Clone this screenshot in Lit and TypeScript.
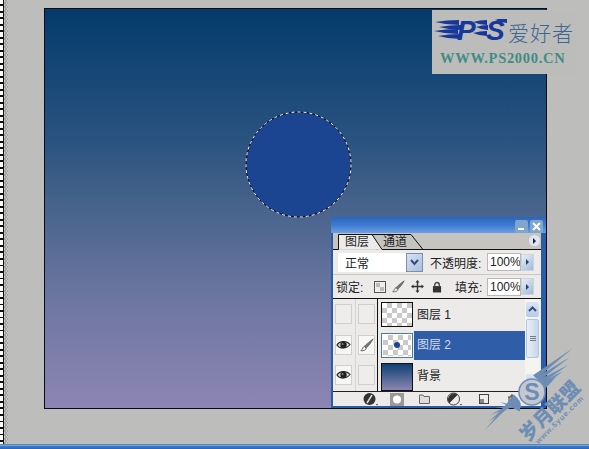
import { LitElement, html, css, svg } from "lit";
import { customElement } from "lit/decorators.js";

const eye = html`<svg class="eye" viewBox="0 0 16 12" width="16" height="12"><path d="M1 6C4 1.5 11 1 15 5.5C11 10.5 4 10.500 1 6Z" fill="#d8d8d4" stroke="#222" stroke-width="1.1"/><circle cx="8" cy="6" r="3.4" fill="#222"/><circle cx="7" cy="5" r="1" fill="#999"/></svg>`;
const brush = (w = 16) => html`<svg viewBox="0 0 16 16" width="${w}" height="${w}"><path d="M15 1C11 4 7 7 5 9.500L7 11.500C10 9 13 5 15 1Z" fill="#777" stroke="#333" stroke-width=".6"/><path d="M5 9.500C3 10 3 13 1 14.500C4 15 7 14 7 11.500Z" fill="#eee" stroke="#333" stroke-width=".8"/></svg>`;

@customElement("app-root")
export class AppRoot extends LitElement {
  static styles = css`
    :host { display: block; width: 589px; height: 449px; overflow: hidden; position: relative; background: #bdbdbb; font-family: "Liberation Sans", "Noto Sans CJK SC", sans-serif; color: #222; }
    .page { display: flex; flex-direction: column; height: 449px; }
    .main { flex: 1; display: flex; min-height: 0; }
    .ruler { width: 3px; background: repeating-linear-gradient(180deg, #fff 0 4.500px, #111 4.500px 6.500px); border-right: 1px solid #111; }
    .dither { width: 4px; background: repeating-conic-gradient(#a3a3a3 0 25%, #c9c9c9 0 50%) 0 0 / 3px 4px; }
    .work { flex: 1; padding: 8px 0 0 36px; box-sizing: border-box; }
    .canvas { width: 501px; height: 399px; border: 1px solid #0b0b18; background: linear-gradient(180deg, #033b6c 0%, #2a5380 33%, #48648c 50%, #6b76a0 72%, #8d85b3 100%); }
    .status { height: 5px; background: linear-gradient(180deg, #8fb3dd 0, #3a76c6 40%, #2d66b8 100%); border-top: 1px solid #5a87bf; box-sizing: border-box; }

    .sel { position: absolute; left: 245px; top: 111px; }

    .logo { position: absolute; left: 432px; top: 10px; width: 145px; height: 64px; background: #bcbcbb; overflow: hidden; }
    .flames { position: absolute; left: 1px; top: 9px; }
    .ps { position: absolute; top: 6px; font: italic 900 28px/30px "Liberation Sans", sans-serif; color: #17389a; }
    .p { left: 25px; }
    .s { left: 54px; }
    .love { position: absolute; left: 76px; top: 9px; font: 300 21px/26px "Noto Sans CJK SC", sans-serif; color: #3d6691; white-space: nowrap; letter-spacing: 1px; }
    .www { position: absolute; left: 8px; top: 41px; font: 700 14.500px/15px "Liberation Serif", serif; color: #3f8c84; white-space: nowrap; letter-spacing: .7px; }

    .panel { position: absolute; left: 331px; top: 217px; width: 215px; height: 191px; background: #ecebea; border: solid #2b5ca6; border-width: 0 5px 2px 2px; box-sizing: border-box; display: flex; flex-direction: column; }
    .title { height: 16px; margin: 0 -5px 0 -2px; flex: none; background: linear-gradient(180deg, #2b66bd 0, #3e7ad0 50%, #6b9fe6 100%); display: flex; justify-content: flex-end; align-items: center; gap: 2px; padding: 2px 3px 0 0; box-sizing: border-box; }
    .wbtn { width: 13px; height: 13px; background: #7fa6cc; border-radius: 2px; display: flex; align-items: center; justify-content: center; }
    .tabs { height: 17px; flex: none; background: #c5c4c1; display: flex; align-items: center; position: relative; font-size: 12px; }
    .tabshape { position: absolute; left: 0; top: 0; }
    .tab { position: relative; line-height: 14px; }
    .t1 { margin-left: 12px; }
    .t2 { margin-left: 14px; }
    .menu { position: absolute; right: 1px; top: 2px; width: 11px; height: 11px; border-radius: 50%; background: #dfe6f2; display: flex; align-items: center; justify-content: center; }
    .tri { width: 0; height: 0; border-left: 3px solid #223; border-top: 3px solid transparent; border-bottom: 3px solid transparent; }

    .blend { height: 25px; flex: none; display: flex; align-items: center; padding-left: 5px; border-bottom: 1px solid #c9c8c4; font-size: 12px; box-sizing: border-box; }
    .lock { height: 24px; flex: none; display: flex; align-items: center; padding-left: 3px; font-size: 12px; border-bottom: 1px solid #111; box-sizing: border-box; }
    .select { width: 85px; height: 19px; background: #fff; display: flex; align-items: center; padding-left: 7px; box-sizing: border-box; position: relative; font-size: 12px; }
    .arrow { position: absolute; right: 0; top: 0; width: 17px; height: 19px; background: linear-gradient(135deg, #d5e2f2, #a9c0dc); border: 1px solid #7d8faa; box-sizing: border-box; display: flex; align-items: center; justify-content: center; }
    .lbl { margin-left: 7px; font-size: 12px; white-space: nowrap; width: 53px; }
    .val { margin-left: 4px; width: 34px; height: 18px; background: #fff; box-sizing: border-box; border: 1px solid #b9b8b4; font-size: 12px; line-height: 16px; overflow: hidden; padding-left: 2px; white-space: nowrap; }
    .step { width: 13px; height: 17px; background: linear-gradient(135deg, #e9f0f8, #9fbad6); display: flex; align-items: center; justify-content: center; border: 1px solid #c8d4e2; box-sizing: border-box; }
    .step .tri { border-left-color: #24406c; }
    .lockt { width: 38px; }
    .licons { display: flex; align-items: center; gap: 6px; width: 81px; }
    .padlock { margin-left: 2px; }
    .fill { width: 28px; white-space: nowrap; }

    .layers { height: 92px; flex: none; display: flex; }
    .rows { width: 192px; flex: none; display: flex; flex-direction: column; }
    .row { height: 30.5px; display: flex; flex: none; box-sizing: border-box; font-size: 12px; overflow: hidden; }
    .c1 { width: 23px; flex: none; padding: 5px 0 0 2px; border-right: 1px solid #d6d5d2; box-sizing: border-box; }
    .c2 { width: 22px; flex: none; padding: 5px 0 0 2px; border-right: 1px solid #111; box-sizing: border-box; }
    .box { width: 17px; height: 20px; box-sizing: border-box; border: 1px solid #d0cfcc; display: flex; align-items: center; justify-content: center; background: #eeedec; }
    .box.on { background: #f6f6f5; }
    .thumb { width: 32px; height: 25px; margin: 3px 0 0 3px; box-sizing: border-box; border: 1px solid #111; flex: none; background: repeating-conic-gradient(#c9c9c9 0 25%, #fff 0 50%) 0 0 / 10px 10px; display: flex; align-items: center; justify-content: center; }
    .thumb.active { border: 2px solid #fff; outline: 1px solid #4d7d96; outline-offset: -1px; }
    .dot { width: 6px; height: 6px; border-radius: 50%; background: #1c4490; }
    .bg { background: linear-gradient(180deg, #0e4272, #8d85b3); height: 28px; }
    .name { margin: 3px 0 0 1px; padding-left: 3px; flex: 1; height: 30px; line-height: 26px; }
    .name.sel-row { background: #2f5da7; color: #cfdcf0; margin-top: 1px; line-height: 29px; }
    .sb { width: 15px; flex: none; background: #f4f4f0; display: flex; flex-direction: column; padding: 3px 1px 0; box-sizing: border-box; }
    .sbb { height: 15px; background: linear-gradient(180deg, #dce6f4, #b6cbe6); border-radius: 2px; flex: none; display: flex; align-items: center; justify-content: center; }
    .thumbbar { margin-top: 2px; height: 39px; background: linear-gradient(90deg, #e8eef8, #c7d6ea); border: 1px solid #b4c6de; border-radius: 2px; box-sizing: border-box; display: flex; align-items: center; justify-content: center; flex: none; }
    .down { margin-top: 16px; }
    .grip { width: 6px; height: 6px; background: repeating-linear-gradient(180deg, #778 0 1px, transparent 1px 2px); }

    .bar { flex: 1; border-top: 1px solid #222; background: #ecebea; display: flex; align-items: center; padding-left: 30px; box-sizing: border-box; min-height: 0; }
    .bar svg { display: block; flex: none; }
    .m12 { margin-left: 12px; }
    .m15 { margin-left: 15px; }
    .m17 { margin-left: 17px; }
    .m18 { margin-left: 18px; }

    .mark { position: absolute; left: 480px; top: 340px; pointer-events: none; }
    .mark text { fill: #6d8db5; font-family: "Noto Sans CJK SC", sans-serif; font-weight: 900; }
    .mark .lat { font-family: "Liberation Sans", sans-serif; font-weight: 700; }
    .mark .dom { letter-spacing: .9px; }
  `;

  feathers(cx: number, cy: number, tips: number[][]) {
    return tips.map(([x, y], i) => {
      const a = Math.atan2(y - cy, x - cx) + Math.PI / 2;
      const w = 2.4;
      const off = (i - (tips.length - 1) / 2) * 3.6;
      const sx = cx + off * Math.cos(a);
      const sy = cy + off * Math.sin(a);
      return svg`<path d="M${sx - w * Math.cos(a)} ${sy - w * Math.sin(a)} L${x} ${y} L${sx + w * Math.cos(a)} ${sy + w * Math.sin(a)}Z" fill="#6d8db5"/>`;
    });
  }

  render() {
    const fl = [[2, 3, 24], [6, 8, 22], [1, 12, 24], [5, 17, 22], [40, 3, 14], [43, 8, 12], [40, 14, 14], [62, 1, 12]];
    return html`
      <div class="page">
        <div class="main">
          <div class="ruler"></div><div class="dither"></div>
          <div class="work"><div class="canvas"></div></div>
        </div>
        <div class="status"></div>
      </div>

      <svg class="sel" width="107" height="107" viewBox="0 0 107 107">
        <circle cx="53.500" cy="53.500" r="52.500" fill="#1c4591"/>
        <circle cx="53.500" cy="53.500" r="52.500" fill="none" stroke="#050a20" stroke-width="1"/>
        <circle cx="53.500" cy="53.500" r="52.500" fill="none" stroke="#fff" stroke-width="1" stroke-dasharray="3 3"/>
      </svg>

      <div class="logo">
        <svg class="flames" width="80" height="26" viewBox="0 0 80 26">
          ${fl.map(([x, y, l]) => svg`<path d="M${x} ${y}Q${x + l / 2} ${y - 2} ${x + l} ${y - 2}L${x + l} ${y + 3}Q${x + l / 2} ${y + 3} ${x} ${y}Z" fill="#17389a"/>`)}
        </svg>
        <div class="ps p">P</div>
        <div class="ps s">S</div>
        <div class="love">爱好者</div>
        <div class="www">WWW.PS2000.CN</div>
      </div>

      <div class="panel">
        <div class="title">
          <div class="wbtn"><svg width="9" height="9"><rect x="1" y="6" width="6" height="2" fill="#fff"/></svg></div>
          <div class="wbtn"><svg width="9" height="9"><path d="M1 1L8 8M8 1L1 8" stroke="#fff" stroke-width="2"/></svg></div>
        </div>
        <div class="tabs">
          <svg class="tabshape" width="208" height="17" viewBox="0 0 208 17">
            <path d="M44 16.500L39 1.500H78L90 16.500" fill="none" stroke="#111"/>
            <path d="M0 16.500H5.500V1.500H39L49 16.500H208" fill="#ecebea" stroke="#111"/>
          </svg>
          <span class="tab t1">图层</span>
          <span class="tab t2">通道</span>
          <div class="menu"><div class="tri"></div></div>
        </div>
        <div class="blend">
          <div class="select">正常
            <div class="arrow"><svg width="9" height="7"><path d="M1 1L4.500 5L8 1" fill="none" stroke="#33507c" stroke-width="2"/></svg></div>
          </div>
          <div class="lbl">不透明度:</div>
          <div class="val">100%</div>
          <div class="step"><div class="tri"></div></div>
        </div>
        <div class="lock">
          <div class="lockt">锁定:</div>
          <div class="licons">
            <svg width="12" height="12"><rect x=".5" y=".5" width="11" height="11" fill="#eee" stroke="#555"/><rect x="2" y="2" width="4" height="4" fill="#bbb"/><rect x="6" y="6" width="4" height="4" fill="#bbb"/></svg>
            ${brush(13)}
            <svg width="13" height="13" viewBox="0 0 13 13"><path d="M6.500 0L8.500 2.500H7.200V5.800H10.500V4.500L13 6.500L10.500 8.500V7.200H7.200V10.500H8.500L6.500 13L4.500 10.500H5.800V7.200H2.500V8.500L0 6.500L2.500 4.500V5.800H5.800V2.500H4.500Z" fill="#333"/></svg>
            <svg class="padlock" width="10" height="12" viewBox="0 0 11 12"><path d="M3 5V3.500A2.500 2.500 0 0 1 8 3.500V5" fill="none" stroke="#444" stroke-width="1.500"/><rect x="1" y="5" width="9" height="7" fill="#333"/></svg>
          </div>
          <div class="fill">填充:</div>
          <div class="val">100%</div>
          <div class="step"><div class="tri"></div></div>
        </div>
        <div class="layers">
          <div class="rows">
            <div class="row">
              <div class="c1"><div class="box"></div></div>
              <div class="c2"><div class="box"></div></div>
              <div class="thumb"></div>
              <div class="name">图层 1</div>
            </div>
            <div class="row">
              <div class="c1"><div class="box on">${eye}</div></div>
              <div class="c2"><div class="box on">${brush(14)}</div></div>
              <div class="thumb active"><div class="dot"></div></div>
              <div class="name sel-row">图层 2</div>
            </div>
            <div class="row">
              <div class="c1"><div class="box on">${eye}</div></div>
              <div class="c2"><div class="box"></div></div>
              <div class="thumb bg"></div>
              <div class="name">背景</div>
            </div>
          </div>
          <div class="sb">
            <div class="sbb"><svg width="9" height="7"><path d="M1 5L4.500 1.500L8 5" fill="none" stroke="#33507c" stroke-width="2"/></svg></div>
            <div class="thumbbar"><div class="grip"></div></div>
            <div class="sbb down"></div>
          </div>
        </div>
        <div class="bar">
          <svg width="15" height="14" viewBox="0 0 15 14"><circle cx="6.500" cy="7" r="6" fill="#333"/><path d="M4 11L9 3" stroke="#ddd" stroke-width="1.500"/><path d="M13 12h2l-1 1.500z" fill="#222"/></svg>
          <svg class="m12" width="14" height="13" viewBox="0 0 14 13"><rect width="14" height="13" fill="#999"/><circle cx="7" cy="6.500" r="4" fill="#fff"/></svg>
          <svg class="m15" width="11" height="10" viewBox="0 0 11 10"><path d="M.5 2.500V1H4L5 2.500H10.500V9.500H.5Z" fill="#ddd" stroke="#666"/></svg>
          <svg class="m17" width="15" height="14" viewBox="0 0 15 14"><circle cx="6.500" cy="7" r="6" fill="#eee" stroke="#444"/><path d="M10.700 2.800A6 6 0 0 0 2.300 11.200Z" fill="#333"/><path d="M13 12h2l-1 1.500z" fill="#222"/></svg>
          <svg class="m17" width="10" height="10" viewBox="0 0 10 10"><rect x=".5" y=".5" width="9" height="9" fill="#eee" stroke="#444"/><rect x="1" y="5" width="4" height="4" fill="#888"/></svg>
          <svg class="m18" width="10" height="11" viewBox="0 0 10 11"><path d="M1 3H9M4 3V1H6V3M2 3V10H8V3" fill="#ccc" stroke="#444"/></svg>
        </div>
      </div>

      <svg class="mark" width="109" height="109" viewBox="0 0 109 109">
        ${this.feathers(60, 42, [[93, 8], [90, 17], [88, 25], [83, 31], [76, 37]])}
        ${this.feathers(40, 62, [[20, 62], [15, 68], [10, 75], [8, 82], [5, 90]])}
        <circle cx="52" cy="52" r="13" fill="#c4c8d0" stroke="#6d8db5" stroke-width="1.500"/>
        <text class="lat" x="52" y="60" text-anchor="middle" font-size="23">S</text>
        <text transform="translate(71 72) rotate(-45)" text-anchor="middle" font-size="19" dominant-baseline="middle">岁月联盟</text>
        <text class="lat dom" transform="translate(80 80) rotate(-45)" text-anchor="middle" font-size="7.500" dominant-baseline="middle">www.5yue.com</text>
      </svg>
    `;
  }
}
